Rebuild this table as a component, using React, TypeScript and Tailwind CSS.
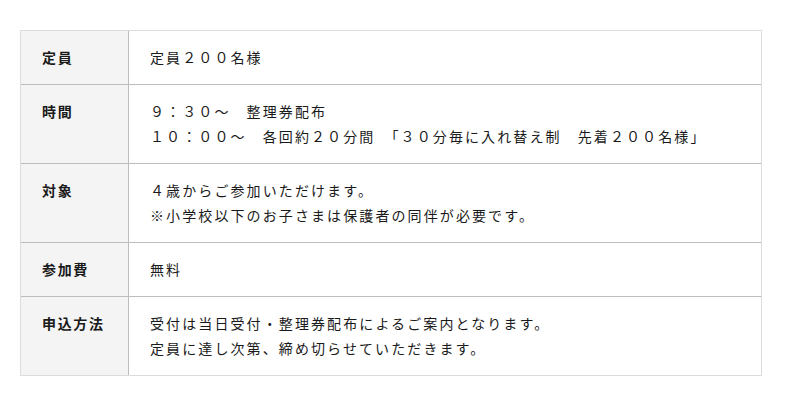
import React from "react";

const rows: { label: string; lines: string[] }[] = [
  { label: "定員", lines: ["定員２００名様"] },
  {
    label: "時間",
    lines: [
      "９：３０～　整理券配布",
      "１０：００～　各回約２０分間　「３０分毎に入れ替え制　先着２００名様」",
    ],
  },
  {
    label: "対象",
    lines: ["４歳からご参加いただけます。", "※小学校以下のお子さまは保護者の同伴が必要です。"],
  },
  { label: "参加費", lines: ["無料"] },
  {
    label: "申込方法",
    lines: ["受付は当日受付・整理券配布によるご案内となります。", "定員に達し次第、締め切らせていただきます。"],
  },
];

export default function App() {
  return (
    <div
      className="w-[800px] h-[406px] bg-white pt-[30px] pl-[20px]"
      style={{ fontFamily: '"Noto Sans CJK JP", "Noto Sans", sans-serif' }}
    >
      <div className="w-[742px] border border-[#dcdcdc] border-b-0 text-[#1a1a1a] text-[14px] leading-[25px]">
        {rows.map((r, i) => (
          <div
            key={i}
            className={
              "flex border-[#bdbdbd] " + (i === rows.length - 1 ? "border-b border-b-[#dcdcdc]" : "border-b")
            }
          >
            <div className="w-[108px] shrink-0 bg-[#f4f4f4] pl-[21px] py-[14px] font-bold tracking-[0.12em] border-r border-[#bdbdbd]">
              {r.label}
            </div>
            <div className="flex-1 pl-[21px] py-[14px] tracking-[2.1px]">
              {r.lines.map((l, j) => (
                <div key={j} className="whitespace-pre">
                  {l}
                </div>
              ))}
            </div>
          </div>
        ))}
      </div>
    </div>
  );
}
